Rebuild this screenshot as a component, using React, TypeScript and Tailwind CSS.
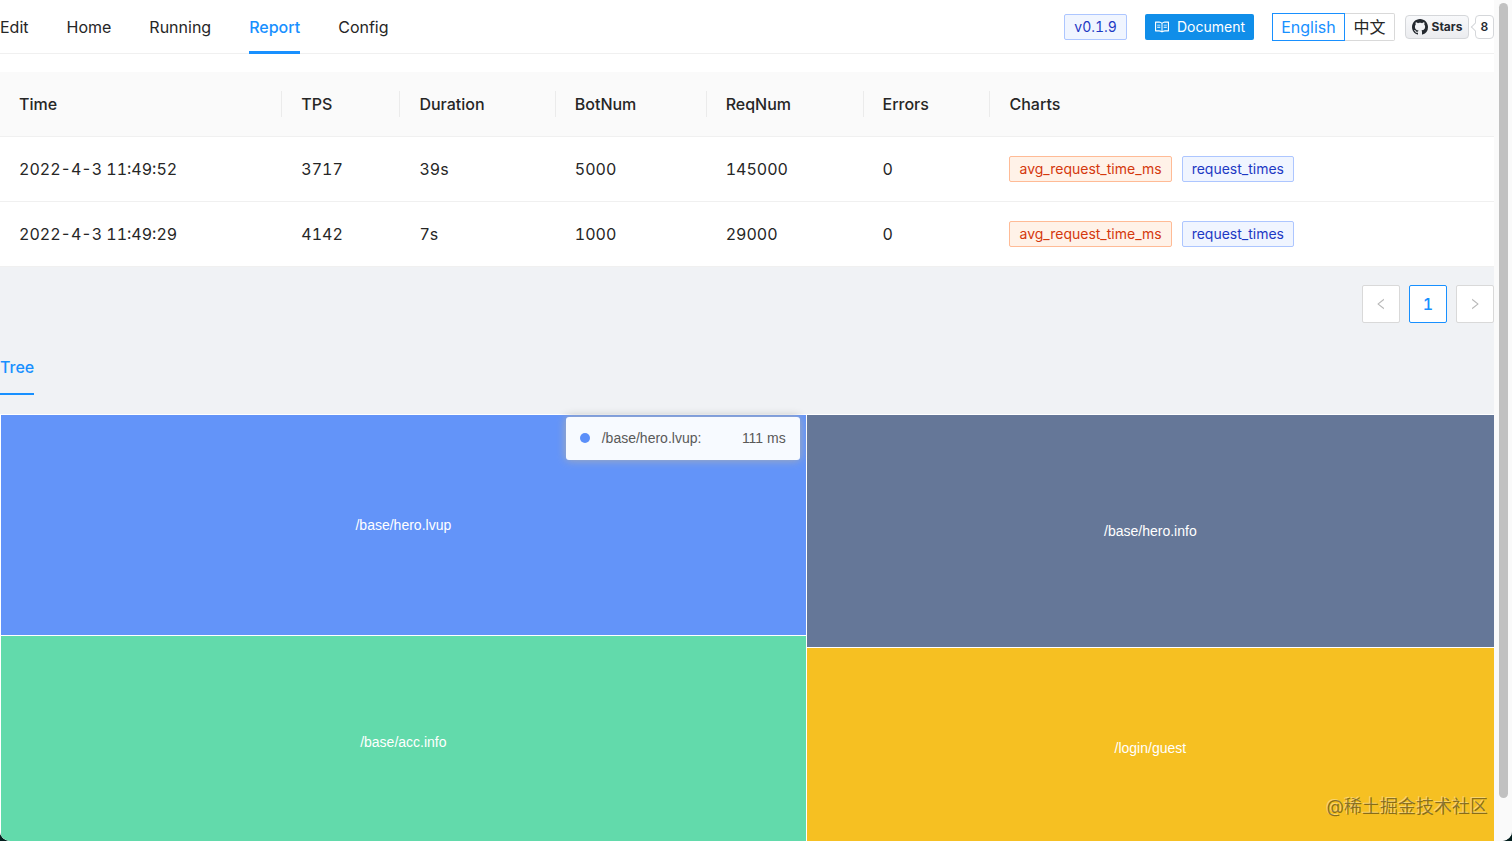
import clsx from "clsx";
import { AiOutlineLeft, AiOutlineRead, AiOutlineRight } from "react-icons/ai";

interface Report {
  time: string;
  tps: number;
  duration: string;
  botNum: number;
  reqNum: number;
  errors: number;
}

const TABS = ["Edit", "Home", "Running", "Report", "Config"];
const ACTIVE_TAB = "Report";

const COLUMNS = [
  { title: "Time", width: "w-[18.9%]" },
  { title: "TPS", width: "w-[7.9%]" },
  { title: "Duration", width: "w-[10.4%]" },
  { title: "BotNum", width: "w-[10.1%]" },
  { title: "ReqNum", width: "w-[10.5%]" },
  { title: "Errors", width: "w-[8.5%]" },
  { title: "Charts", width: "" },
];

const REPORTS: Report[] = [
  {
    time: "2022-4-3 11:49:52",
    tps: 3717,
    duration: "39s",
    botNum: 5000,
    reqNum: 145000,
    errors: 0,
  },
  {
    time: "2022-4-3 11:49:29",
    tps: 4142,
    duration: "7s",
    botNum: 1000,
    reqNum: 29000,
    errors: 0,
  },
];

function GithubMark() {
  return (
    <svg viewBox="0 0 16 16" fill="currentColor" className="size-4">
      <path d="M8 0C3.58 0 0 3.58 0 8c0 3.54 2.29 6.53 5.47 7.59.4.07.55-.17.55-.38 0-.19-.01-.82-.01-1.49-2.01.37-2.53-.49-2.69-.94-.09-.23-.48-.94-.82-1.13-.28-.15-.68-.52-.01-.53.63-.01 1.08.58 1.23.82.72 1.21 1.87.87 2.33.66.07-.52.28-.87.51-1.07-1.78-.2-3.64-.89-3.64-3.95 0-.87.31-1.59.82-2.15-.08-.2-.36-1.02.08-2.12 0 0 .67-.21 2.2.82.64-.18 1.32-.27 2-.27.68 0 1.36.09 2 .27 1.53-1.04 2.2-.82 2.2-.82.44 1.1.16 1.92.08 2.12.51.56.82 1.27.82 2.15 0 3.07-1.87 3.75-3.65 3.95.29.25.54.73.54 1.48 0 1.07-.01 1.93-.01 2.2 0 .21.15.46.55.38A8.013 8.013 0 0 0 16 8c0-4.42-3.58-8-8-8z" />
    </svg>
  );
}

function Header() {
  return (
    <header className="flex h-[54px] justify-between border-b border-[#f0f0f0]">
      <nav className="flex gap-[38px] text-base">
        {TABS.map((tab) => (
          <a
            key={tab}
            href={`#${tab.toLowerCase()}`}
            className={clsx(
              "flex h-[54px] items-center border-b-3 pt-[2px]",
              tab === ACTIVE_TAB
                ? "border-[#1890ff] font-medium text-[#1890ff]"
                : "border-transparent"
            )}
          >
            {tab}
          </a>
        ))}
      </nav>
      <div className="flex items-center">
        <span className="mr-[18px] flex h-[26px] items-center rounded-xs border border-[#adc6ff] bg-[#f0f5ff] px-[9px] text-sm text-[#1d39c4]">
          v0.1.9
        </span>
        <a
          href="#document"
          className="mr-[18px] flex h-[26px] items-center gap-[7px] rounded-xs bg-[#108ee9] px-[9px] text-sm text-white"
        >
          <AiOutlineRead className="size-4" />
          Document
        </a>
        <div className="mr-[10px] flex h-7 text-base">
          <button
            type="button"
            className="w-[73px] border border-[#1890ff] text-[#1890ff]"
          >
            English
          </button>
          <button
            type="button"
            className="w-[50px] rounded-r-xs border border-l-0 border-[#d9d9d9]"
          >
            中文
          </button>
        </div>
        <a
          href="#stars"
          className="flex h-[24px] w-[64px] items-center justify-center gap-[4px] rounded-sm border border-[#d5d7da] bg-linear-to-b from-[#f8f9fb] to-[#ebecef] text-xs font-bold text-[#24292f]"
        >
          <GithubMark />
          Stars
        </a>
        <a
          href="#stargazers"
          className="relative ml-[6px] flex h-[24px] w-[19px] items-center justify-center rounded-sm border border-[#d5d7da] bg-white text-xs font-semibold text-[#24292f]"
        >
          <span className="absolute -left-1 size-[6px] rotate-45 border-b border-l border-[#d5d7da] bg-white" />
          8
        </a>
      </div>
    </header>
  );
}

function ReportTable() {
  return (
    <table className="mt-[18px] w-full table-fixed text-left text-base">
      <thead>
        <tr className="h-16 border-b border-[#f0f0f0] bg-[#fafafa]">
          {COLUMNS.map(({ title, width }, i) => (
            <th key={title} className={clsx("font-medium", width)}>
              <div
                className={clsx(
                  "flex h-[26px] items-center pl-[19px]",
                  i < COLUMNS.length - 1 && "border-r border-[#ebebeb]"
                )}
              >
                {title}
              </div>
            </th>
          ))}
        </tr>
      </thead>
      <tbody>
        {REPORTS.map((report) => (
          <tr key={report.time} className="h-[65px] border-b border-[#f0f0f0]">
            <td className="pl-[19px]">{report.time}</td>
            <td className="pl-[19px]">{report.tps}</td>
            <td className="pl-[19px]">{report.duration}</td>
            <td className="pl-[19px]">{report.botNum}</td>
            <td className="pl-[19px]">{report.reqNum}</td>
            <td className="pl-[19px]">{report.errors}</td>
            <td className="pl-[19px]">
              <div className="flex gap-[10px] text-sm">
                <button
                  type="button"
                  className="h-[26px] rounded-xs border border-[#ffbb96] bg-[#fff2e8] px-[9px] text-[#d4380d]"
                >
                  avg_request_time_ms
                </button>
                <button
                  type="button"
                  className="h-[26px] rounded-xs border border-[#adc6ff] bg-[#f0f5ff] px-[9px] text-[#1d39c4]"
                >
                  request_times
                </button>
              </div>
            </td>
          </tr>
        ))}
      </tbody>
    </table>
  );
}

function Pagination() {
  return (
    <div className="mt-[18px] flex justify-end gap-[9px]">
      <button
        type="button"
        aria-label="Previous page"
        disabled
        className="flex size-[38px] items-center justify-center rounded-xs border border-[#d9d9d9] bg-white text-[#b8b8b8]"
      >
        <AiOutlineLeft className="size-[14px]" />
      </button>
      <button
        type="button"
        className="size-[38px] rounded-xs border border-[#1890ff] bg-white font-medium text-[#1890ff]"
      >
        1
      </button>
      <button
        type="button"
        aria-label="Next page"
        disabled
        className="flex size-[38px] items-center justify-center rounded-xs border border-[#d9d9d9] bg-white text-[#b8b8b8]"
      >
        <AiOutlineRight className="size-[14px]" />
      </button>
    </div>
  );
}

function TreeTooltip() {
  return (
    <div className="absolute top-[2px] right-[6px] flex h-[43px] w-[234px] items-center rounded-[3px] bg-white/95 px-[14px] text-[#595959] shadow-[0_0_10px_#aeaeae]">
      <span className="mr-3 size-[10px] rounded-full bg-[#5b8ff9]" />
      /base/hero.lvup:
      <span className="ml-auto">111 ms</span>
    </div>
  );
}

function Treemap() {
  return (
    <div className="mt-[19px] flex h-[434px] gap-px border-t border-l border-white bg-white font-['Liberation_Sans',sans-serif] text-sm text-white">
      <div className="flex w-[53.9%] flex-col gap-px">
        <div className="relative flex grow-[220] basis-0 items-center justify-center bg-[#6394f9]">
          /base/hero.lvup
          <TreeTooltip />
        </div>
        <div className="flex grow-[212] basis-0 items-center justify-center bg-[#62daab]">
          /base/acc.info
        </div>
      </div>
      <div className="flex flex-1 flex-col gap-px">
        <div className="flex grow-[232] basis-0 items-center justify-center bg-[#657798]">
          /base/hero.info
        </div>
        <div className="flex grow-[200] basis-0 items-center justify-center bg-[#f6c022]">
          /login/guest
        </div>
      </div>
    </div>
  );
}

export default function App() {
  return (
    <div className="h-screen bg-[#04201f] font-[Inter,'Noto_Sans_CJK_SC',sans-serif] text-[#262626] tabular-nums">
      <div className="relative flex h-full overflow-hidden rounded-b-[10px] bg-[#f0f2f5]">
        <main className="min-w-0 flex-1">
          <div className="bg-white">
            <Header />
            <ReportTable />
          </div>
          <Pagination />
          <div className="mt-[19px] flex">
            <a
              href="#tree"
              className="flex h-[53px] items-center border-b-2 border-[#1890ff] text-base font-medium text-[#1890ff]"
            >
              Tree
            </a>
          </div>
          <Treemap />
        </main>
        <div className="flex w-[18px] justify-center bg-[#fafafa] pt-[3px] pb-[43px]">
          <div className="w-[9px] rounded-full bg-[#c1c1c1]" />
        </div>
        <span className="absolute right-6 bottom-5 text-lg text-black/45 [text-shadow:-1px_-1px_0_rgba(255,255,255,0.35)]">
          @稀土掘金技术社区
        </span>
      </div>
    </div>
  );
}
